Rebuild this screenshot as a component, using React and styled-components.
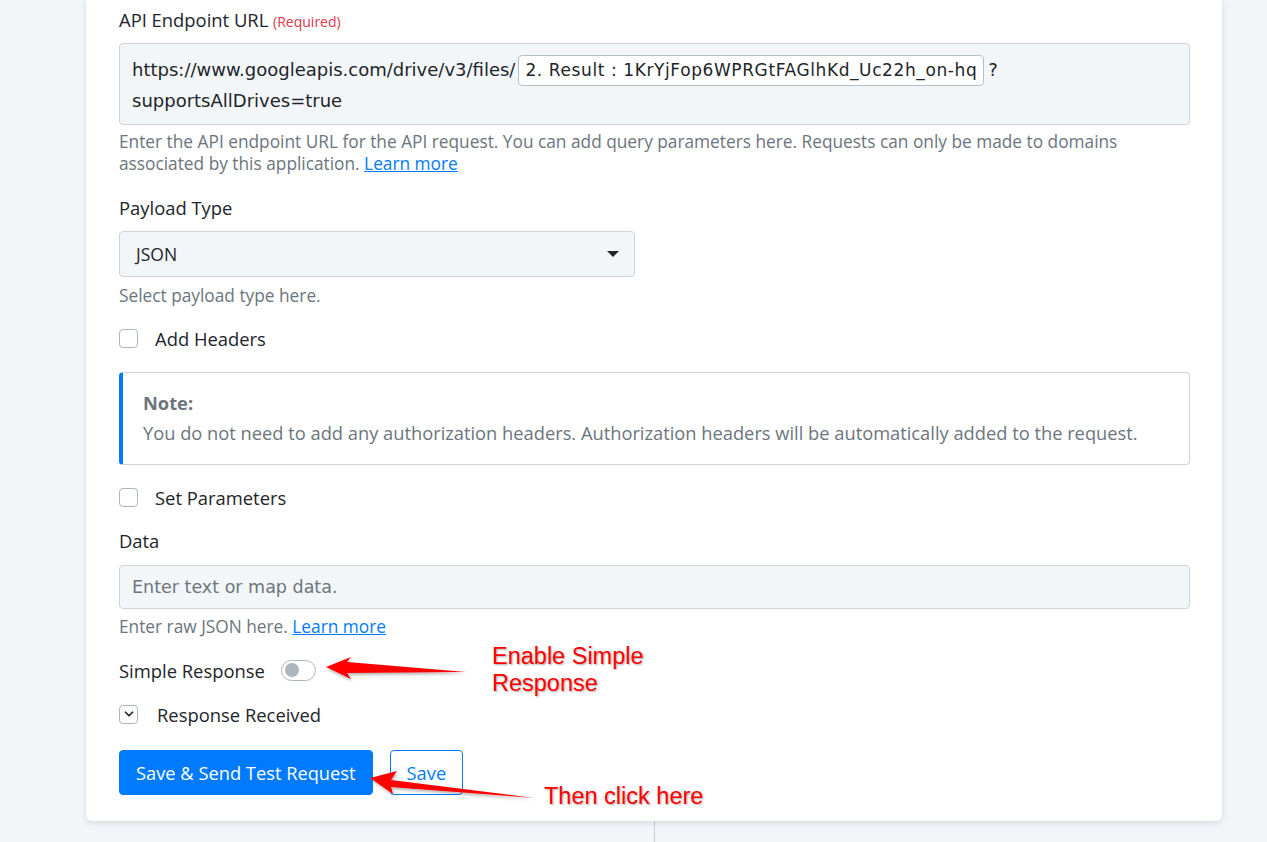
import React from "react";
import styled, { createGlobalStyle } from "styled-components";
import { ChevronDown } from "lucide-react";

const GlobalStyle = createGlobalStyle`
  body {
    margin: 0;
    background: #f3f6f9;
    font-family: "Open Sans", "Lato", sans-serif;
    color: #212529;
  }
`;

const App = () => {
  return (
    <>
      <GlobalStyle />
      <Page>
        <Card>
          <Label>
            API Endpoint URL <Required>(Required)</Required>
          </Label>
          <UrlBox>
            https://www.googleapis.com/drive/v3/files/
            <Tag>2. Result : 1KrYjFop6WPRGtFAGlhKd_Uc22h_on-hq</Tag>?
            <br />
            supportsAllDrives=true
          </UrlBox>
          <Help>
            Enter the API endpoint URL for the API request. You can add query parameters here. Requests can only be made to domains
            associated by this application. <HelpLink href="#">Learn more</HelpLink>
          </Help>

          <Label $top={21}>Payload Type</Label>
          <Select>
            <span>JSON</span>
            <Caret />
          </Select>
          <Help $top={8}>Select payload type here.</Help>

          <CheckRow $top={19}>
            <Checkbox />
            <CheckText>Add Headers</CheckText>
          </CheckRow>

          <Note>
            <NoteTitle>Note:</NoteTitle>
            <NoteText>
              You do not need to add any authorization headers. Authorization headers will be automatically added to the request.
            </NoteText>
          </Note>

          <CheckRow $top={20}>
            <Checkbox />
            <CheckText>Set Parameters</CheckText>
          </CheckRow>

          <Label $top={20} $bottom={12}>Data</Label>
          <DataInput placeholder="Enter text or map data." />
          <Help $top={7}>
            Enter raw JSON here. <HelpLink href="#">Learn more</HelpLink>
          </Help>

          <ToggleRow>
            <span>Simple Response</span>
            <Toggle>
              <Knob />
            </Toggle>
          </ToggleRow>

          <CheckRow $top={20}>
            <Checkbox $checked>
              <ChevronDown size={14} strokeWidth={3} />
            </Checkbox>
            <CheckText $gap={19}>Response Received</CheckText>
          </CheckRow>

          <Actions>
            <PrimaryButton>Save &amp; Send Test Request</PrimaryButton>
            <OutlineButton>Save</OutlineButton>
          </Actions>

          {/* red call-outs drawn over the form */}
          <Arrows width="600" height="200" viewBox="0 0 600 200">
            <defs>
              <filter id="shade" x="-10%" y="-50%" width="130%" height="200%">
                <feDropShadow dx="1" dy="2" stdDeviation="1.5" floodColor="#000" floodOpacity="0.3" />
              </filter>
            </defs>
            <polygon
              filter="url(#shade)"
              fill="#ff0000"
              points="240,27 265,17 261,22 380,32 261,33 265,39"
            />
            <polygon
              filter="url(#shade)"
              fill="#ff0000"
              points="284,138 311,131 305,140 448,158 305,147 307,154"
            />
          </Arrows>
          <Callout $x={406} $y={643}>
            Enable Simple
            <br />
            Response
          </Callout>
          <Callout $x={458} $y={783}>Then click here</Callout>
        </Card>
        <Connector />
      </Page>
    </>
  );
};

export default App;

const Page = styled.div`
  padding-left: 86px;
  min-height: 100vh;
`;

const Card = styled.div`
  position: relative;
  width: 1136px;
  box-sizing: border-box;
  padding: 8px 32px 26px 33px;
  background: #fff;
  border-radius: 0 0 6px 6px;
  box-shadow: 0 2px 6px rgba(40, 60, 90, 0.15);
`;

const Connector = styled.div`
  width: 1px;
  height: 30px;
  margin-left: 568px;
  background: #c9ced4;
`;

const Label = styled.div`
  margin-top: ${(p) => p.$top || 0}px;
  margin-bottom: ${(p) => p.$bottom || 11}px;
  font-size: 18.4px;
  line-height: 24px;
  height: 24px;
`;

const Required = styled.span`
  font-size: 14px;
  line-height: 1;
  color: #e0344a;
`;

const UrlBox = styled.div`
  box-sizing: border-box;
  height: 82px;
  padding: 11px 12px 9px;
  background: #f3f6f9;
  border: 1px solid #ced4da;
  border-radius: 4px;
  font-family: "DejaVu Sans", Verdana, sans-serif;
  font-size: 18px;
  line-height: 30px;
  color: #212529;
`;

const Tag = styled.span`
  display: inline-block;
  margin: 0 4px 0 3px;
  padding: 0 6px;
  line-height: 29px;
  background: #fff;
  border: 1px solid #b6bec7;
  border-radius: 4px;
  font-family: "DejaVu Sans", sans-serif;
  font-size: 17px;
  letter-spacing: 0.6px;
`;

const Help = styled.div`
  margin-top: ${(p) => p.$top || 6}px;
  font-size: 17.3px;
  line-height: 22px;
  color: #6c757d;
`;

const HelpLink = styled.a`
  color: #007bff;
  text-decoration: underline;
`;

const Select = styled.div`
  box-sizing: border-box;
  display: flex;
  align-items: center;
  justify-content: space-between;
  width: 516px;
  height: 46px;
  padding: 0 15px 0 16px;
  background: #f3f6f9;
  border: 1px solid #ced4da;
  border-radius: 4px;
  font-size: 17.5px;
`;

const Caret = styled.span`
  width: 0;
  height: 0;
  border-left: 6px solid transparent;
  border-right: 6px solid transparent;
  border-top: 6px solid #212529;
`;

const CheckRow = styled.div`
  display: flex;
  align-items: center;
  margin-top: ${(p) => p.$top || 0}px;
  height: 24px;
`;

const Checkbox = styled.span`
  box-sizing: border-box;
  display: flex;
  align-items: center;
  justify-content: center;
  width: 19px;
  height: 19px;
  border: 1px solid #adb5bd;
  border-radius: 4px;
  background: #fff;
  color: #212529;
`;

const CheckText = styled.span`
  margin-left: ${(p) => p.$gap || 17}px;
  font-size: 18.4px;
`;

const Note = styled.div`
  margin-top: 22px;
  padding: 19px 20px 20px 20px;
  border: 1px solid #ced4da;
  border-left: 4px solid #007bff;
  border-radius: 4px;
  color: #6c757d;
  font-size: 18.3px;
`;

const NoteTitle = styled.div`
  font-weight: 700;
  line-height: 22px;
`;

const NoteText = styled.div`
  margin-top: 8px;
  line-height: 22px;
`;

const DataInput = styled.input`
  display: block;
  box-sizing: border-box;
  width: 100%;
  height: 44px;
  padding: 0 12px;
  background: #f3f6f9;
  border: 1px solid #ced4da;
  border-radius: 4px;
  font-family: "DejaVu Sans", Verdana, sans-serif;
  font-size: 17.5px;
  outline: none;

  &::placeholder {
    color: #6c757d;
  }
`;

const ToggleRow = styled.div`
  display: flex;
  align-items: center;
  gap: 16px;
  margin-top: 20px;
  height: 24px;
  font-size: 18.4px;
`;

const Toggle = styled.span`
  box-sizing: border-box;
  display: flex;
  align-items: center;
  width: 35px;
  height: 21px;
  padding: 0 3px;
  border: 1px solid #adb5bd;
  border-radius: 11px;
  background: #fff;
`;

const Knob = styled.span`
  width: 14px;
  height: 14px;
  border-radius: 50%;
  background: #adb5bd;
`;

const Actions = styled.div`
  display: flex;
  gap: 17px;
  margin-top: 24px;
`;

const PrimaryButton = styled.button`
  height: 45px;
  padding: 0 16px;
  background: #007bff;
  border: 1px solid #007bff;
  border-radius: 4px;
  color: #fff;
  font-family: "Open Sans", "Lato", sans-serif;
  font-size: 18.3px;
  cursor: pointer;
`;

const OutlineButton = styled(PrimaryButton)`
  background: #fff;
  color: #007bff;
`;

const Arrows = styled.svg`
  position: absolute;
  left: 0;
  top: 640px;
  pointer-events: none;
  overflow: visible;
`;

const Callout = styled.div`
  position: absolute;
  left: ${(p) => p.$x}px;
  top: ${(p) => p.$y}px;
  font-family: "Liberation Sans", Arial, sans-serif;
  font-size: 23.5px;
  line-height: 27px;
  color: #ff0000;
  text-shadow: 1px 1px 2px rgba(0, 0, 0, 0.35);
`;
